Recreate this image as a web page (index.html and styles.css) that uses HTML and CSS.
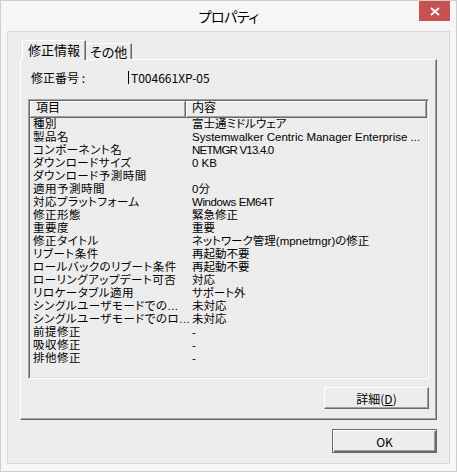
FILE: index.html
```html
<!DOCTYPE html>
<html lang="ja">
<head>
<meta charset="utf-8">
<title>プロパティ</title>
<link rel="stylesheet" href="styles.css">
</head>
<body>
<div class="window">
  <div class="titlebar">
    <span class="tb-spacer"></span>
    <span class="title">プロパティ</span>
    <span class="close"><svg width="10" height="9" viewBox="0 0 10 9"><path d="M1 1 L9 8 M9 1 L1 8" stroke="#fff" stroke-width="1.8" fill="none"/></svg></span>
  </div>
  <div class="client">
    <div class="tabs">
      <div class="tab active">修正情報</div>
      <div class="tab">その他</div>
    </div>
    <div class="panel">
      <div class="field"><span class="label">修正番号 :</span><span class="value"><i class="caret"></i>T004661XP-05</span></div>
      <div class="list">
        <div class="list-head"><div class="hcell c1">項目</div><div class="hcell c2">内容</div></div>
        <div class="rows">
          <div class="row"><span class="c1">種別</span><span class="c2">富士通ミドルウェア</span></div>
          <div class="row"><span class="c1">製品名</span><span class="c2">Systemwalker Centric Manager Enterprise ...</span></div>
          <div class="row"><span class="c1">コンポーネント名</span><span class="c2 cond">NETMGR V13.4.0</span></div>
          <div class="row"><span class="c1">ダウンロードサイズ</span><span class="c2">0 KB</span></div>
          <div class="row"><span class="c1">ダウンロード予測時間</span><span class="c2"></span></div>
          <div class="row"><span class="c1">適用予測時間</span><span class="c2">0分</span></div>
          <div class="row"><span class="c1">対応プラットフォーム</span><span class="c2 semi">Windows EM64T</span></div>
          <div class="row"><span class="c1">修正形態</span><span class="c2">緊急修正</span></div>
          <div class="row"><span class="c1">重要度</span><span class="c2">重要</span></div>
          <div class="row"><span class="c1">修正タイトル</span><span class="c2">ネットワーク管理(mpnetmgr)の修正</span></div>
          <div class="row"><span class="c1">リブート条件</span><span class="c2">再起動不要</span></div>
          <div class="row"><span class="c1">ロールバックのリブート条件</span><span class="c2">再起動不要</span></div>
          <div class="row"><span class="c1">ローリングアップデート可否</span><span class="c2">対応</span></div>
          <div class="row"><span class="c1">リロケータブル適用</span><span class="c2">サポート外</span></div>
          <div class="row"><span class="c1">シングルユーザモードでの...</span><span class="c2">未対応</span></div>
          <div class="row"><span class="c1">シングルユーザモードでのロ...</span><span class="c2">未対応</span></div>
          <div class="row"><span class="c1">前提修正</span><span class="c2">-</span></div>
          <div class="row"><span class="c1">吸収修正</span><span class="c2">-</span></div>
          <div class="row"><span class="c1">排他修正</span><span class="c2">-</span></div>
        </div>
      </div>
      <div class="panel-actions"><button class="btn detail">詳細(<u>D</u>)</button></div>
    </div>
    <div class="dialog-actions"><button class="btn ok">OK</button></div>
  </div>
</div>
</body>
</html>
```
FILE: styles.css
```css
html, body {
  margin: 0;
  padding: 0;
  background: #ffffff;
}
body {
  font-family: "Noto Sans CJK JP", "Liberation Sans", sans-serif;
  font-size: 12px;
  color: #000;
  font-feature-settings: "palt";
}
.window {
  width: 457px;
  height: 472px;
  box-sizing: border-box;
  border: 1px solid #cfcfcf;
  padding: 0 6px 7px 6px;
  background: repeating-conic-gradient(#fafafa 0 25%, #f2f2f2 0 50%) 0 0 / 2px 2px;
  display: flex;
  flex-direction: column;
}
.titlebar {
  height: 30px;
  display: grid;
  grid-template-columns: 31px 1fr 31px;
  flex: none;
}
.title {
  text-align: center;
  font-size: 14px;
  line-height: 30px;
  letter-spacing: -0.5px;
  color: #000;
}
.close {
  height: 20px;
  background: #c75050;
  display: flex;
  align-items: center;
  justify-content: center;
}
.client {
  flex: 1;
  box-sizing: border-box;
  border: 1px solid #d9d9d9;
  padding: 8px 12px 10px 12px;
  background: repeating-conic-gradient(#f3f3f3 0 25%, #e6e6e6 0 50%) 0 0 / 2px 2px;
  display: flex;
  flex-direction: column;
}
.tabs {
  display: flex;
  align-items: flex-end;
  height: 19px;
  padding-left: 2px;
  position: relative;
  z-index: 1;
}
.tab {
  box-sizing: border-box;
  height: 16px;
  font-size: 13px;
  line-height: 15px;
  padding: 0 4px 0 4px;
  border-top: 1px solid #fff;
  border-right: 1px solid #696969;
  box-shadow: inset -1px 0 #a0a0a0;
}
.tab.active {
  height: 20px;
  margin-bottom: -1px;
  line-height: 18px;
  padding: 0 5px 0 5px;
  border-left: 1px solid #fff;
  background: repeating-conic-gradient(#f3f3f3 0 25%, #e6e6e6 0 50%) 0 0 / 2px 2px;
}
.panel {
  box-sizing: border-box;
  height: 361px;
  border-top: 1px solid #fff;
  border-left: 1px solid #fff;
  border-right: 1px solid #696969;
  border-bottom: 1px solid #696969;
  box-shadow: inset -1px -1px #a0a0a0;
  padding: 11px 7px 10px 7px;
  display: flex;
  flex-direction: column;
}
.field {
  height: 13px;
  line-height: 13px;
  margin-bottom: 15px;
  padding-left: 3px;
  display: flex;
  white-space: nowrap;
}
.label {
  width: 97px;
  flex: none;
}
.value {
  display: flex;
  align-items: center;
}
.caret {
  display: inline-block;
  width: 1px;
  height: 13px;
  background: #000;
  margin-right: 2px;
}
.list {
  box-sizing: border-box;
  height: 280px;
  border-top: 1px solid #a0a0a0;
  border-left: 1px solid #a0a0a0;
  border-right: 1px solid #fff;
  border-bottom: 1px solid #fff;
  box-shadow: inset 1px 1px #696969, inset -1px -1px #e3e3e3;
  padding: 1px;
  font-family: "Liberation Sans", "Noto Sans CJK JP", sans-serif;
  font-size: 11.5px;
}
.list-head {
  display: flex;
  height: 17px;
}
.hcell {
  box-sizing: border-box;
  height: 17px;
  line-height: 15px;
  padding-left: 6px;
  font-size: 12px;
  border-right: 1px solid #696969;
  border-bottom: 1px solid #696969;
  box-shadow: inset 1px 1px #fff, inset -1px -1px #a0a0a0;
}
.hcell.c1 { width: 156px; }
.hcell.c2 { width: 241px; }
.row {
  display: flex;
  height: 13px;
  line-height: 13px;
  white-space: nowrap;
}
.row .c1 {
  width: 156px;
  padding-left: 3px;
  box-sizing: border-box;
  letter-spacing: 0.5px;
  flex: none;
}
.row .c2 {
  width: 241px;
  padding-left: 6px;
  box-sizing: border-box;
  flex: none;
}
.row .cond {
  letter-spacing: -0.8px;
}
.row .semi {
  letter-spacing: -0.4px;
}
.panel-actions {
  margin-top: 8px;
  display: flex;
  justify-content: flex-end;
}
.btn {
  font: inherit;
  color: #000;
  margin: 0;
  box-sizing: border-box;
  width: 105px;
  padding: 0;
  background: repeating-conic-gradient(#f3f3f3 0 25%, #e6e6e6 0 50%) 0 0 / 2px 2px;
  border-style: solid;
  border-width: 1px;
  border-color: #fff #696969 #696969 #fff;
  box-shadow: inset -1px -1px #a0a0a0;
}
.detail {
  height: 22px;
  line-height: 19px;
  font-size: 12px;
}
.detail u { text-underline-offset: 1px; }
.dialog-actions {
  margin-top: 9px;
  display: flex;
  justify-content: flex-end;
}
.ok {
  height: 24px;
  line-height: 21px;
  border-color: #6a6a6a;
  box-shadow: inset 1px 1px #fff, inset -1px -1px #696969, inset -2px -2px #a0a0a0;
}
```
